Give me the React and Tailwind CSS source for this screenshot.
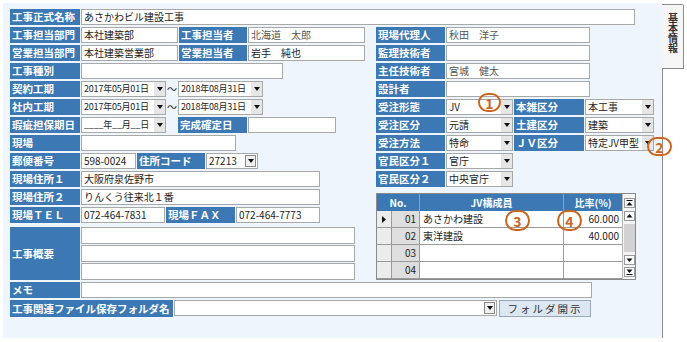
import React from 'react';

const Label = ({ w = 'w-[70px]', className = '', children }) => (
  <div className={`${w} h-[16px] shrink-0 overflow-hidden whitespace-nowrap bg-[#3c78b4] pl-[2px] text-[10.5px] font-bold leading-[16px] text-white ${className}`}>
    {children}
  </div>
);

const Box = ({ w, h = 'h-[16px]', className = '', children }) => (
  <div className={`${w} ${h} shrink-0 overflow-hidden whitespace-nowrap border border-[#a8a8a8] bg-white pl-[2px] text-[10px] leading-[14px] text-[#222] ${className}`}>
    {children}
  </div>
);

const Arrow = () => (
  <svg width="6" height="4" viewBox="0 0 6 4">
    <path d="M0 0H6L3 4Z" fill="#111" />
  </svg>
);

const Select = ({ w, className = '', boxed = false, children }) => (
  <div className={`${w} flex h-[16px] shrink-0 border border-[#a8a8a8] bg-white text-[10px] leading-[14px] text-[#222]`}>
    <span className={`flex-1 overflow-hidden whitespace-nowrap pl-[2px] ${className}`}>{children}</span>
    {boxed ? (
      <span className="my-[1px] mr-[1px] flex w-[11px] items-center justify-center border border-[#8a8a8a] bg-[#f0f0f0]">
        <Arrow />
      </span>
    ) : (
      <span className="flex w-[11px] items-center justify-center bg-[#e6e6e6]">
        <Arrow />
      </span>
    )}
  </div>
);

const Row = ({ children }) => <div className="flex h-[16px] gap-[1px]">{children}</div>;

const Mark = ({ n, className }) => (
  <div className={`absolute flex items-center justify-center rounded-full border-2 border-[#c8661f] text-[14px] font-bold leading-none text-[#c8661f] ${className}`}>
    {n}
  </div>
);

// scrollbar button glyphs
const SBtn = ({ kind }) => (
  <div className="mx-auto flex h-[10px] w-[11px] items-center justify-center border border-[#9a9a9a] bg-white">
    <svg width="7" height="6" viewBox="0 0 7 6">
      {kind === 'first' && (
        <>
          <rect x="0.5" y="0" width="6" height="1" fill="#111" />
          <path d="M0.5 5.5H6.5L3.5 2Z" fill="#111" />
        </>
      )}
      {kind === 'up' && <path d="M0.5 4.5H6.5L3.5 1Z" fill="#111" />}
      {kind === 'down' && <path d="M0.5 1.5H6.5L3.5 5Z" fill="#111" />}
      {kind === 'last' && (
        <>
          <path d="M0.5 0.5H6.5L3.5 4Z" fill="#111" />
          <rect x="0.5" y="5" width="6" height="1" fill="#111" />
        </>
      )}
    </svg>
  </div>
);

const members = [
  { no: '01', name: 'あさかわ建設', rate: '60.000', current: true },
  { no: '02', name: '東洋建設', rate: '40.000' },
  { no: '03', name: '', rate: '' },
  { no: '04', name: '', rate: '' },
];

const JvGrid = () => (
  <div className="mt-[4px] flex w-[260px] border border-[#8a8a8a] bg-[#f0f0f0]">
    <div className="w-[245px]">
      <div className="flex h-[17px] bg-[#3c78b4] text-[10px] font-bold leading-[17px] text-white">
        <div className="w-[43px] border-r border-[#7ea6d0] text-center">No.</div>
        <div className="w-[144px] border-r border-[#7ea6d0] text-center">JV構成員</div>
        <div className="w-[58px] text-center">比率(%)</div>
      </div>
      {members.map((m) => (
        <div key={m.no} className="flex h-[17px] border-b border-[#9a9a9a] text-[10px] leading-[16px] text-[#222]">
          <div className="flex w-[15px] items-center justify-center border-r border-[#9a9a9a] bg-[#ececec]">
            {m.current && (
              <svg width="4" height="7" viewBox="0 0 4 7">
                <path d="M0 0L4 3.5L0 7Z" fill="#111" />
              </svg>
            )}
          </div>
          <div className="w-[28px] border-r border-[#9a9a9a] bg-[#dedede] pr-[3px] text-right">{m.no}</div>
          <div className="w-[144px] border-r border-[#9a9a9a] bg-white pl-[3px]">{m.name}</div>
          <div className="w-[58px] bg-white pr-[3px] text-right">{m.rate}</div>
        </div>
      ))}
    </div>
    <div className="flex w-[13px] flex-col border-l border-[#b5b5b5] bg-[#f4f4f4] pt-[4px]">
      <SBtn kind="first" />
      <div className="mt-[3px]">
        <SBtn kind="up" />
      </div>
      <div className="mx-auto mt-[3px] h-[28px] w-[11px] bg-[#d2d2d2]" />
      <div className="mt-[3px]">
        <SBtn kind="down" />
      </div>
      <div className="mt-[2px]">
        <SBtn kind="last" />
      </div>
    </div>
  </div>
);

export default function App() {
  return (
    <div className="relative flex h-[342px] w-[687px] overflow-hidden bg-white font-['Noto_Sans_CJK_JP',sans-serif]">
      <div className="mt-[3px] ml-[3px] flex h-[335px] w-[659px] flex-col gap-[2px] bg-[#eef5fd] pt-[6px] pl-[7px]">
        <Row>
          <Label>工事正式名称</Label>
          <Box w="w-[554px]">あさかわビル建設工事</Box>
        </Row>

        <div className="flex">
          {/* left column */}
          <div className="flex w-[356px] flex-col gap-[2px]">
            <Row>
              <Label>工事担当部門</Label>
              <Box w="w-[97px]">本社建築部</Box>
              <Label w="w-[68px]">工事担当者</Label>
              <Box w="w-[117px]" className="text-[#555]">北海道　太郎</Box>
            </Row>
            <Row>
              <Label>営業担当部門</Label>
              <Box w="w-[97px]">本社建築営業部</Box>
              <Label w="w-[68px]">営業担当者</Label>
              <Box w="w-[117px]">岩手　純也</Box>
            </Row>
            <Row>
              <Label>工事種別</Label>
              <Box w="w-[202px]" />
            </Row>
            <Row>
              <Label>契約工期</Label>
              <Select w="w-[85px]" className="text-[9px] tracking-[-0.2px]">2017年05月01日</Select>
              <div className="w-[10px] text-center text-[10px] leading-[16px] text-[#222]">〜</div>
              <Select w="w-[85px]" className="text-[9px] tracking-[-0.2px]">2018年08月31日</Select>
            </Row>
            <Row>
              <Label>社内工期</Label>
              <Select w="w-[85px]" className="text-[9px] tracking-[-0.2px]">2017年05月01日</Select>
              <div className="w-[10px] text-center text-[10px] leading-[16px] text-[#222]">〜</div>
              <Select w="w-[85px]" className="text-[9px] tracking-[-0.2px]">2018年08月31日</Select>
            </Row>
            <Row>
              <Label>瑕疵担保期日</Label>
              <Select w="w-[85px]" className="text-[9px] tracking-[-0.2px]">____年__月__日</Select>
              <div className="w-[10px]" />
              <Label w="w-[69px]">完成確定日</Label>
              <Box w="w-[88px]" />
            </Row>
            <Row>
              <Label>現場</Label>
              <Box w="w-[155px]" />
            </Row>
            <Row>
              <Label>郵便番号</Label>
              <Box w="w-[55px]">598-0024</Box>
              <Label w="w-[68px]">住所コード</Label>
              <Select w="w-[52px]" boxed>27213</Select>
            </Row>
            <Row>
              <Label>現場住所１</Label>
              <Box w="w-[239px]">大阪府泉佐野市</Box>
            </Row>
            <Row>
              <Label>現場住所２</Label>
              <Box w="w-[239px]">りんくう往来北１番</Box>
            </Row>
            <Row>
              <Label>現場ＴＥＬ</Label>
              <Box w="w-[84px]">072-464-7831</Box>
              <Label w="w-[69px]">現場ＦＡＸ</Label>
              <Box w="w-[84px]">072-464-7773</Box>
            </Row>
            <div className="mt-[2px] flex gap-[1px]">
              <div className="flex h-[53px] w-[70px] items-center bg-[#3c78b4] pl-[2px] text-[10.5px] font-bold text-white">
                工事概要
              </div>
              <div className="flex flex-col gap-[1px]">
                <Box w="w-[274px]" h="h-[17px]" />
                <Box w="w-[274px]" h="h-[17px]" />
                <Box w="w-[274px]" h="h-[17px]" />
              </div>
            </div>
          </div>

          {/* right column */}
          <div className="ml-[10px] flex flex-col gap-[2px]">
            <Row>
              <Label w="w-[69px]">現場代理人</Label>
              <Box w="w-[144px]" className="text-[#555]">秋田　洋子</Box>
            </Row>
            <Row>
              <Label w="w-[69px]">監理技術者</Label>
              <Box w="w-[144px]" />
            </Row>
            <Row>
              <Label w="w-[69px]">主任技術者</Label>
              <Box w="w-[144px]" className="text-[#555]">宮城　健太</Box>
            </Row>
            <Row>
              <Label w="w-[69px]">設計者</Label>
              <Box w="w-[144px]" />
            </Row>
            <Row>
              <Label w="w-[69px]">受注形態</Label>
              <Select w="w-[67px]">JV</Select>
              <Label>本雑区分</Label>
              <Select w="w-[69px]">本工事</Select>
            </Row>
            <Row>
              <Label w="w-[69px]">受注区分</Label>
              <Select w="w-[67px]">元請</Select>
              <Label>土建区分</Label>
              <Select w="w-[69px]">建築</Select>
            </Row>
            <Row>
              <Label w="w-[69px]">受注方法</Label>
              <Select w="w-[67px]">特命</Select>
              <Label>ＪＶ区分</Label>
              <Select w="w-[69px]">特定JV甲型</Select>
            </Row>
            <Row>
              <Label w="w-[69px]">官民区分１</Label>
              <Select w="w-[67px]">官庁</Select>
            </Row>
            <Row>
              <Label w="w-[69px]">官民区分２</Label>
              <Select w="w-[67px]">中央官庁</Select>
            </Row>
            <JvGrid />
          </div>
        </div>

        <Row>
          <Label>メモ</Label>
          <Box w="w-[511px]" />
        </Row>
        <div className="flex h-[17px] gap-[1px]">
          <Label w="w-[163px]" className="h-[17px] leading-[17px]">工事関連ファイル保存フォルダ名</Label>
          <Select w="w-[323px]" boxed />
          <button className="ml-[1px] h-[17px] w-[92px] border border-[#9aa8b8] bg-[#dde7f1] text-[10.5px] leading-[15px] tracking-[2px] text-[#333]">
            フォルダ開示
          </button>
        </div>
      </div>

      {/* side tab strip */}
      <div className="flex w-[25px] flex-col pt-[4px] pb-[4px]">
        <div className="flex h-[65px] w-[22px] justify-center rounded-tr-[2px] border-t border-r border-b border-[#8c8c8c] bg-[#f6f6f6] pt-[8px]">
          <span className="text-[10px] leading-[12px] font-bold text-[#333] [writing-mode:vertical-rl] [text-orientation:upright]">基本情報</span>
        </div>
        <div className="flex-1 border-l border-[#8c8c8c]" />
      </div>

      <Mark n="1" className="left-[478px] top-[93px] h-[19px] w-[23px]" />
      <Mark n="2" className="left-[647px] top-[137px] h-[19px] w-[25px]" />
      <Mark n="3" className="left-[505px] top-[210px] h-[21px] w-[25px]" />
      <Mark n="4" className="left-[557px] top-[210px] h-[21px] w-[25px]" />
    </div>
  );
}
